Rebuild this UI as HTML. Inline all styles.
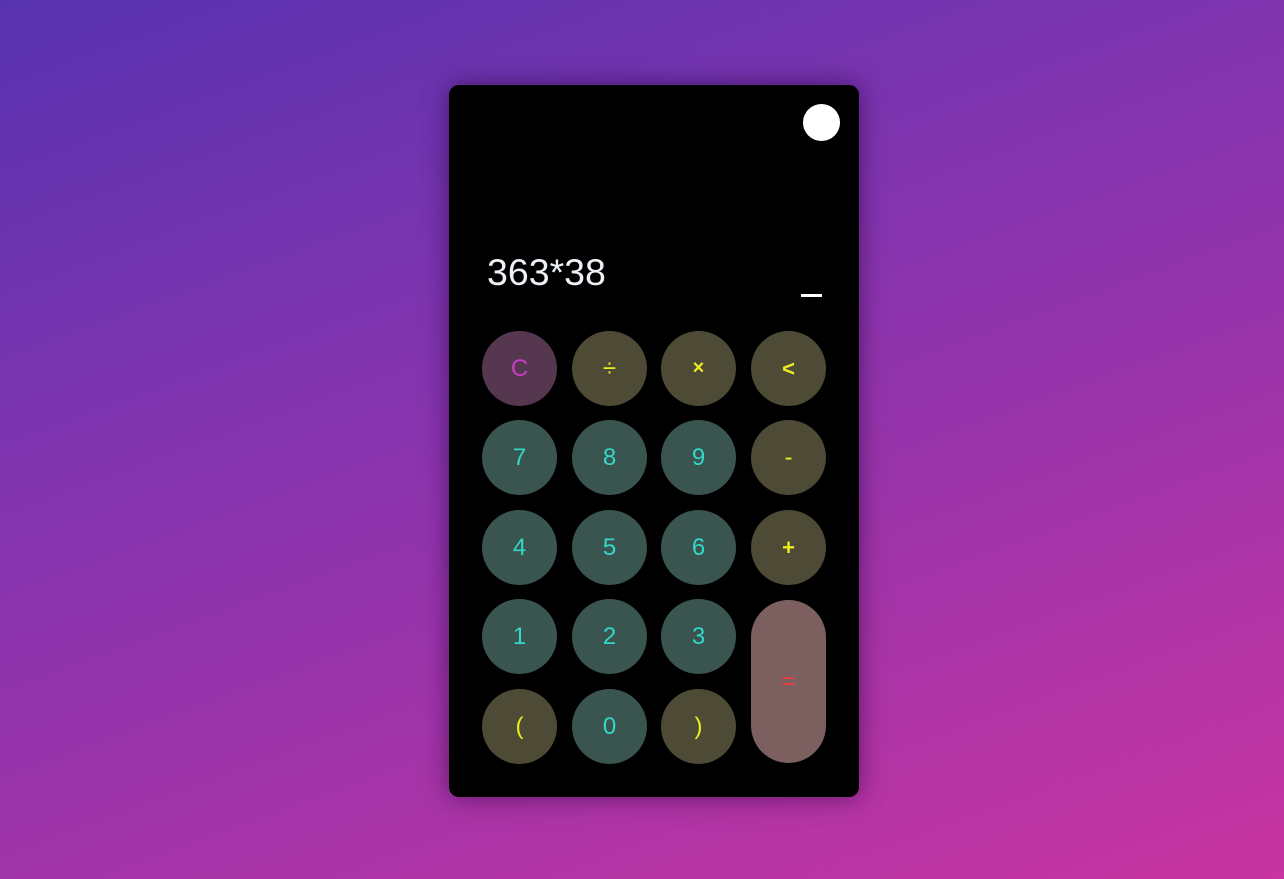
<!DOCTYPE html>
<html><head><meta charset="utf-8"><style>
html,body{margin:0;padding:0;width:1284px;height:879px;overflow:hidden}
body{background:linear-gradient(160deg,#5833b0 0%,#8a34ae 45%,#c834a0 100%);font-family:"Liberation Sans",sans-serif;position:relative}
.card{position:absolute;left:449px;top:85px;width:410px;height:712px;background:#000;border-radius:10px;box-shadow:0 0 25px rgba(40,0,60,.6)}
.tog{position:absolute;left:803px;top:104px;width:37px;height:37px;border-radius:50%;background:#fff}
.disp{position:absolute;left:487px;top:249px;font-size:37.5px;color:#eef2f8;line-height:46px}
.cur{position:absolute;left:801px;top:294px;width:21px;height:3px;background:#fff}
.b{position:absolute;width:75px;height:75px;border-radius:38px;display:flex;align-items:center;justify-content:center;font-size:24px}
.c{background:#553750;color:#c83dc8}
.o{background:#4d4a35;color:#ecec1e}
.d{background:#3a5450;color:#34d8c8}
.e{background:#7c6060;color:#e84040;height:163px}
</style></head><body>
<div class="card"></div>
<div class="tog"></div>
<div class="disp">363*38</div>
<div class="cur"></div>
<div class="b c" style="left:482px;top:331px">C</div>
<div class="b o" style="left:572px;top:331px">÷</div>
<div class="b o" style="left:661px;top:331px;font-weight:bold;font-size:20px">×</div>
<div class="b o" style="left:751px;top:331px;font-size:22px;font-weight:bold">&lt;</div>
<div class="b d" style="left:482px;top:420px">7</div>
<div class="b d" style="left:572px;top:420px">8</div>
<div class="b d" style="left:661px;top:420px">9</div>
<div class="b o" style="left:751px;top:420px">-</div>
<div class="b d" style="left:482px;top:510px">4</div>
<div class="b d" style="left:572px;top:510px">5</div>
<div class="b d" style="left:661px;top:510px">6</div>
<div class="b o" style="left:751px;top:510px;font-size:22px;font-weight:bold">+</div>
<div class="b d" style="left:482px;top:599px">1</div>
<div class="b d" style="left:572px;top:599px">2</div>
<div class="b d" style="left:661px;top:599px">3</div>
<div class="b e" style="left:751px;top:600px">=</div>
<div class="b o" style="left:482px;top:689px">(</div>
<div class="b d" style="left:572px;top:689px">0</div>
<div class="b o" style="left:661px;top:689px">)</div>
</body></html>
